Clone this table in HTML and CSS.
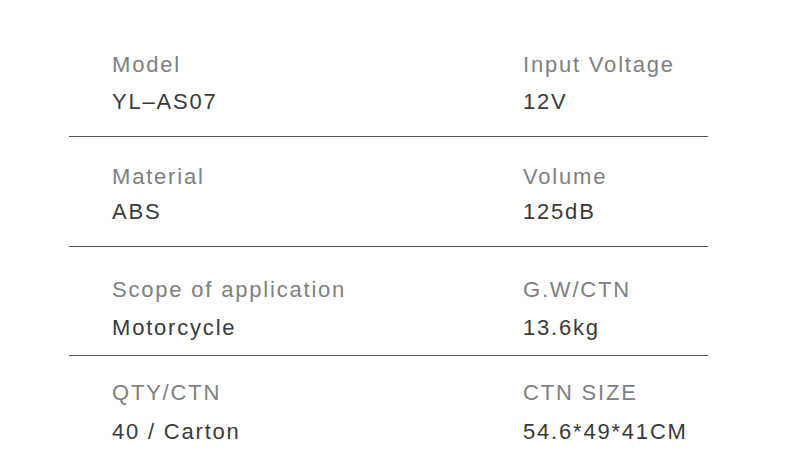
FILE: index.html
```html
<!DOCTYPE html>
<html lang="en">
<head>
<meta charset="utf-8">
<title>Specifications</title>
<link rel="stylesheet" href="styles.css">
</head>
<body>
<div class="specs">
  <div class="row row-1">
    <div class="cell"><div class="label">Model</div><div class="value">YL–AS07</div></div>
    <div class="cell"><div class="label">Input Voltage</div><div class="value">12V</div></div>
  </div>
  <div class="row row-2">
    <div class="cell"><div class="label">Material</div><div class="value">ABS</div></div>
    <div class="cell"><div class="label">Volume</div><div class="value">125dB</div></div>
  </div>
  <div class="row row-3">
    <div class="cell"><div class="label">Scope of application</div><div class="value">Motorcycle</div></div>
    <div class="cell"><div class="label">G.W/CTN</div><div class="value">13.6kg</div></div>
  </div>
  <div class="row row-4">
    <div class="cell"><div class="label">QTY/CTN</div><div class="value">40 / Carton</div></div>
    <div class="cell"><div class="label">CTN SIZE</div><div class="value">54.6*49*41CM</div></div>
  </div>
</div>
</body>
</html>
```
FILE: styles.css
```css
html, body {
  margin: 0;
  padding: 0;
  background: #ffffff;
}
body {
  font-family: "Liberation Sans", Arial, sans-serif;
  font-size: 22px;
  line-height: 22px;
  letter-spacing: 1.8px;
  width: 790px;
  height: 476px;
  overflow: hidden;
}
.specs {
  margin-left: 69px;
  width: 639px;
  padding-top: 54px;
}
.row {
  display: grid;
  grid-template-columns: 411px 1fr;
  padding-left: 43px;
  border-bottom: 1px solid #555555;
}
.cell {
  display: flex;
  flex-direction: column;
  gap: 15px;
}
.label {
  color: #808080;
  white-space: nowrap;
}
.value {
  color: #3a3a3a;
  white-space: nowrap;
}
.row-1 { padding-top: 0; padding-bottom: 23px; }
.row-2 { padding-top: 29px; padding-bottom: 23px; }
.row-2 .cell { gap: 13px; }
.row-3 { padding-top: 32px; padding-bottom: 16px; }
.row-3 .cell { gap: 16px; }
.row-4 { padding-top: 26px; padding-bottom: 0; border-bottom: none; }
.row-4 .cell { gap: 17px; }
```
